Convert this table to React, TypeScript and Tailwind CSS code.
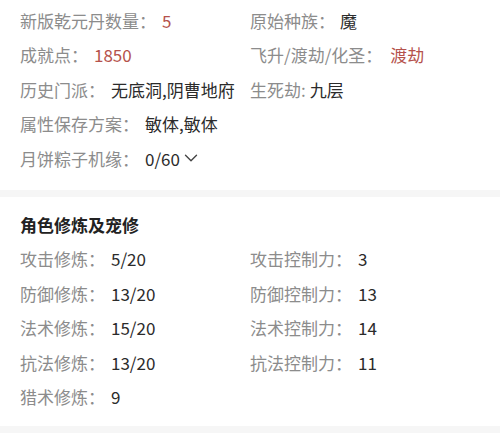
import { ChevronDown } from 'lucide-react'

const font = { fontFamily: '"Noto Sans CJK SC", "Noto Sans", sans-serif' }

type Cell = { label: string; value: string; red?: boolean; gap?: string }

function Row({ label, value, red, gap = 'ml-[6px]', extra }: Cell & { extra?: React.ReactNode }) {
  return (
    <div className="flex items-center h-[34.5px] whitespace-nowrap">
      <span className="text-[#8c8c8c]">{label}</span>
      <span className={`${gap} ${red ? 'text-[#b5524c]' : 'text-[#2b2b2b]'} flex items-center`}>
        {value}
        {extra}
      </span>
    </div>
  )
}

export default function App() {
  const cultivation: [Cell, Cell | null][] = [
    [{ label: '攻击修炼：', value: '5/20' }, { label: '攻击控制力：', value: '3' }],
    [{ label: '防御修炼：', value: '13/20' }, { label: '防御控制力：', value: '13' }],
    [{ label: '法术修炼：', value: '15/20' }, { label: '法术控制力：', value: '14' }],
    [{ label: '抗法修炼：', value: '13/20' }, { label: '抗法控制力：', value: '11' }],
    [{ label: '猎术修炼：', value: '9' }, null],
  ]

  return (
    <div className="w-[500px] h-[443px] bg-white text-[17px] overflow-hidden" style={font}>
      {/* basic info */}
      <div className="px-5 pt-[3px] pb-[14px]">
        <div className="grid grid-cols-2">
          <Row label="新版乾元丹数量：" value="5" red />
          <Row label="原始种族：" value="魔" gap="ml-[5px]" />
          <Row label="成就点：" value="1850" red />
          <Row label="飞升/渡劫/化圣：" value="渡劫" red gap="ml-[8px]" />
          <Row label="历史门派：" value="无底洞,阴曹地府" />
          <Row label="生死劫:" value="九层" gap="ml-[4px]" />
          <Row label="属性保存方案：" value="敏体,敏体" />
          <div />
          <Row
            label="月饼粽子机缘："
            value="0/60"
            extra={<ChevronDown className="w-[22px] h-[22px] text-[#444]" strokeWidth={1.5} />}
          />
        </div>
      </div>

      <div className="h-[7px] bg-[#f6f6f6]" />

      {/* 修炼 */}
      <div className="px-5 pt-[11px] pb-[12px]">
        <div className="h-[34px] flex items-center font-bold text-[#222] text-[17px]">角色修炼及宠修</div>
        <div className="grid grid-cols-2">
          {cultivation.map(([l, r], i) => (
            <div key={i} className="contents">
              <Row {...l} />
              {r ? <Row {...r} /> : <div />}
            </div>
          ))}
        </div>
      </div>

      <div className="h-[7px] bg-[#f6f6f6]" />
    </div>
  )
}
